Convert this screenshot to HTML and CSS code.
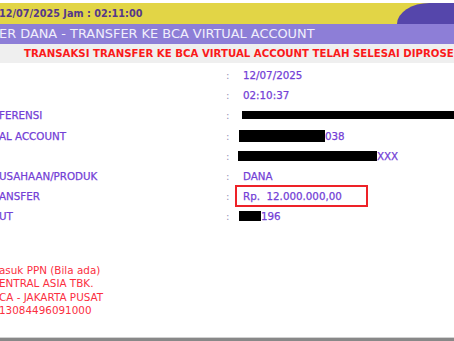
FILE: index.html
```html
<!DOCTYPE html>
<html lang="id">
<head>
  <meta charset="UTF-8">
  <title>Transfer Dana</title>
  <meta name="viewport" content="width=device-width, initial-scale=1.0">
  <link rel="stylesheet" href="styles.css">
</head>
<body>

  <div class="topbar">
    <span class="stamp">12/07/2025 Jam : 02:11:00</span>
    <div class="curve"></div>
  </div>

  <div class="titlebar">ER DANA - TRANSFER KE BCA VIRTUAL ACCOUNT</div>

  <div class="notice">TRANSAKSI TRANSFER KE BCA VIRTUAL ACCOUNT TELAH SELESAI DIPROSES</div>

  <div class="detail">
    <div class="label"></div><div class="colon">:</div><div class="value">12/07/2025</div>
    <div class="label"></div><div class="colon">:</div><div class="value">02:10:37</div>
    <div class="label">FERENSI</div><div class="colon">:</div><div class="value"><span class="redact r-ref"></span></div>
    <div class="label">AL ACCOUNT</div><div class="colon">:</div><div class="value"><span class="redact r-va"></span>038</div>
    <div class="label"></div><div class="colon">:</div><div class="value"><span class="redact r-name"></span>XXX</div>
    <div class="label">USAHAAN/PRODUK</div><div class="colon">:</div><div class="value">DANA</div>
    <div class="label">ANSFER</div><div class="colon">:</div><div class="value"><span class="amount">Rp.&nbsp;&nbsp;12.000.000,00</span></div>
    <div class="label">UT</div><div class="colon">:</div><div class="value"><span class="redact r-acc"></span>196</div>
  </div>

  <div class="notes">
    <div>asuk PPN (Bila ada)</div>
    <div>ENTRAL ASIA TBK.</div>
    <div>CA - JAKARTA PUSAT</div>
    <div>13084496091000</div>
  </div>

  <div class="bottombar"></div>

</body>
</html>
```

FILE: styles.css
```css
html, body {
  height: 100%;
}

body {
  margin: 0;
  background: #fff;
  font-family: "DejaVu Sans", Verdana, sans-serif;
  display: flex;
  flex-direction: column;
  overflow: hidden;
}

.topbar {
  margin-top: 3px;
  height: 21px;
  background: #e2d546;
  display: flex;
  align-items: center;
}

.stamp {
  font-size: 9.7px;
  font-weight: bold;
  color: #55388a;
  margin-left: -1px;
  white-space: nowrap;
}

.curve {
  margin-left: auto;
  align-self: stretch;
  width: 57px;
  background: #5546ab;
  border-top-left-radius: 34px 22px;
}

.titlebar {
  height: 20px;
  line-height: 20px;
  background: #8d7ed7;
  color: #f1effc;
  font-size: 12.9px;
  white-space: nowrap;
  overflow: hidden;
  margin-left: -1px;
}

.notice {
  height: 19px;
  line-height: 20px;
  background: #efefef;
  color: #fa1a1a;
  font-size: 10.2px;
  font-weight: bold;
  padding-left: 24px;
  white-space: nowrap;
  overflow: hidden;
}

.detail {
  margin-top: 2px;
  display: grid;
  grid-template-columns: 226px 12px 1fr;
  grid-auto-rows: 20.2px;
  align-items: center;
  font-size: 10.3px;
  color: #7340d6;
  -webkit-text-stroke: 0.25px #7340d6;
}

.label {
  white-space: nowrap;
  margin-left: -1px;
}

.colon {
  color: #9a90b8;
  -webkit-text-stroke: 0;
}

.value {
  display: flex;
  align-items: center;
  padding-left: 5px;
  white-space: nowrap;
}

.redact {
  display: inline-block;
  background: #000;
}

.r-ref {
  width: 220px;
  height: 8px;
  margin-left: -1px;
}

.r-va {
  width: 86px;
  height: 12px;
  margin-left: -4px;
}

.r-name {
  width: 139px;
  height: 10px;
  margin-left: -5px;
}

.r-acc {
  width: 22px;
  height: 10px;
  margin-left: -4px;
}

.amount {
  display: inline-block;
  margin-left: -8px;
  padding: 3px 24px 3px 6px;
  border: 2px solid #ee2228;
}

.notes {
  margin-top: 37px;
  font-size: 10.4px;
  line-height: 13.6px;
  color: #fb2f3f;
  white-space: nowrap;
  margin-left: -1px;
}

.bottombar {
  margin-top: auto;
  height: 3px;
  background: #888;
  border-top: 1px solid #d2d2d2;
}
```
